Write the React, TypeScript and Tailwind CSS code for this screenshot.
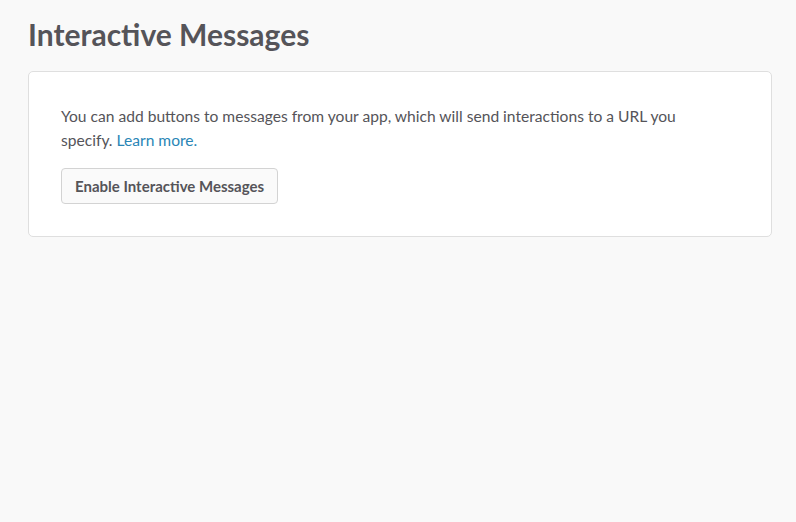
export default function App() {
  return (
    <div className="min-h-screen bg-[#f9f9f9] px-7 pt-4 font-['Lato','Liberation_Sans',sans-serif]">
      <h1 className="text-[30px] font-bold leading-[36px] text-[#555459] mb-[19px]">
        Interactive Messages
      </h1>

      <div className="bg-white border border-[#dfdfdf] rounded-[5px] px-8 pt-8 pb-8 w-[744px]">
        <p className="max-w-[660px] text-[15.6px] leading-6 text-[#555459] mb-4">
          You can add buttons to messages from your app, which will send interactions to a URL you
          specify. <a className="text-[#2a86b6]" href="#">Learn more.</a>
        </p>
        <button className="h-9 px-[13px] border border-[#d3d3d3] rounded-[4px] bg-[#fafafa] text-[15px] font-bold text-[#555459]">
          Enable Interactive Messages
        </button>
      </div>
    </div>
  )
}
